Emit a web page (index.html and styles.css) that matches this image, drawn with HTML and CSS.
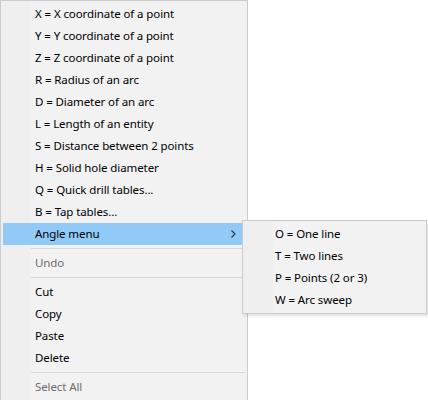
FILE: index.html
```html
<!DOCTYPE html>
<html>
<head>
<meta charset="utf-8">
<link rel="stylesheet" href="styles.css">
</head>
<body>
<div class="menu main">
  <div class="item">X = X coordinate of a point</div>
  <div class="item">Y = Y coordinate of a point</div>
  <div class="item">Z = Z coordinate of a point</div>
  <div class="item">R = Radius of an arc</div>
  <div class="item">D = Diameter of an arc</div>
  <div class="item">L = Length of an entity</div>
  <div class="item">S = Distance between 2 points</div>
  <div class="item">H = Solid hole diameter</div>
  <div class="item">Q = Quick drill tables...</div>
  <div class="item">B = Tap tables...</div>
  <div class="item active"><span>Angle menu</span>
    <svg class="chev" width="5" height="8" viewBox="0 0 5 8"><path d="M0.5 0.5 L4 4 L0.5 7.5" fill="none" stroke="#333" stroke-width="1.1"/></svg>
  </div>
  <div class="sep"></div>
  <div class="item disabled">Undo</div>
  <div class="sep"></div>
  <div class="item">Cut</div>
  <div class="item">Copy</div>
  <div class="item">Paste</div>
  <div class="item">Delete</div>
  <div class="sep"></div>
  <div class="item disabled">Select All</div>
</div>
<div class="menu sub">
  <div class="item">O = One line</div>
  <div class="item">T = Two lines</div>
  <div class="item">P = Points (2 or 3)</div>
  <div class="item">W = Arc sweep</div>
</div>
</body>
</html>
```
FILE: styles.css
```css
html, body {
  margin: 0;
  padding: 0;
  background: #ffffff;
  overflow: hidden;
  height: 400px;
}
body {
  font-family: "Noto Sans", "Open Sans", sans-serif;
  font-size: 11.5px;
  letter-spacing: -0.1px;
  color: #000;
}
.menu {
  box-sizing: border-box;
  border: 1px solid #cccccc;
  padding: 2px;
  background: linear-gradient(to right, #efefef 0, #efefef 30px, #f2f2f2 30px);
  display: flex;
  flex-direction: column;
}
.main {
  width: 248px;
  height: 400px;
  border-bottom: 0;
  padding-bottom: 0;
}
.sub {
  position: absolute;
  left: 242px;
  top: 220px;
  width: 185px;
  height: 94px;
  box-shadow: 2px 2px 3px rgba(0,0,0,0.12);
}
.item {
  height: 22px;
  line-height: 22px;
  padding-left: 32px;
  display: flex;
  align-items: center;
  white-space: nowrap;
  flex-shrink: 0;
}
.sub .item {
  padding-left: 30px;
}
.item.active {
  background: #91c9f7;
  justify-content: space-between;
  padding-right: 9px;
}
.chev {
  display: block;
}
.item.disabled {
  color: #6d6d6d;
}
.sep {
  height: 7px;
  display: flex;
  align-items: center;
  padding-left: 28px;
  flex-shrink: 0;
}
.sep::before {
  content: "";
  display: block;
  flex: 1;
  height: 1px;
  background: #d7d7d7;
}
```
